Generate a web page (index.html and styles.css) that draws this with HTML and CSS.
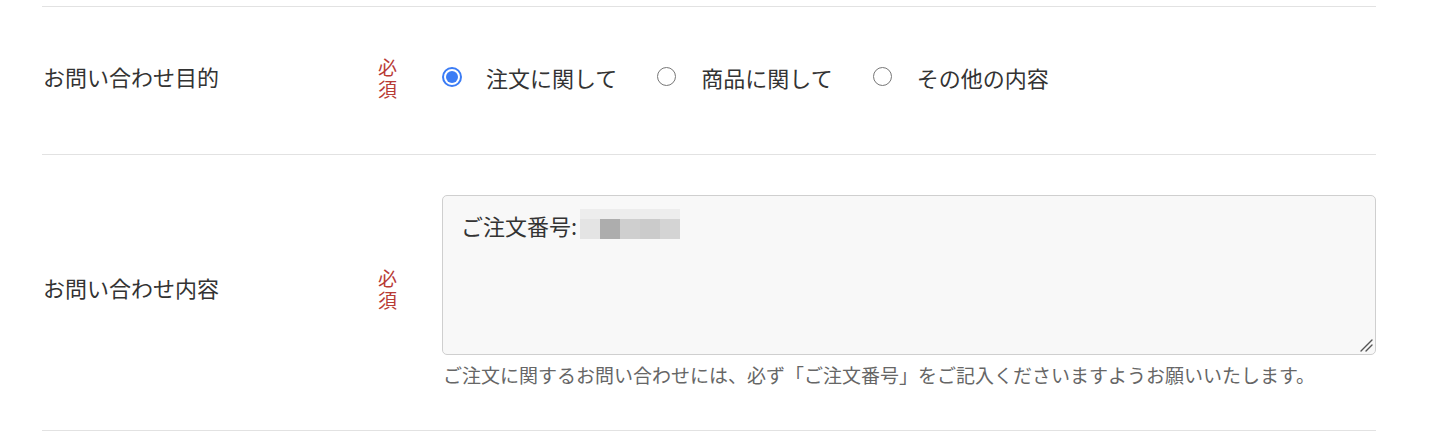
FILE: index.html
```html
<!DOCTYPE html>
<html lang="ja">
<head>
<meta charset="utf-8">
<title>お問い合わせ</title>
<link rel="stylesheet" href="styles.css">
</head>
<body>
<div class="form">
  <div class="row row-purpose">
    <div class="label">お問い合わせ目的</div>
    <div class="req">必須</div>
    <div class="field radios">
      <label class="radio"><span class="dot checked"></span><span class="rtext">注文に関して</span></label>
      <label class="radio"><span class="dot"></span><span class="rtext">商品に関して</span></label>
      <label class="radio"><span class="dot"></span><span class="rtext">その他の内容</span></label>
    </div>
  </div>
  <div class="row row-content">
    <div class="label">お問い合わせ内容</div>
    <div class="req">必須</div>
    <div class="field">
      <div class="textarea">
        <span class="ta-text">ご注文番号:</span><span class="blur"><span class="brow top"><i></i><i></i><i></i><i></i><i></i></span><span class="brow bot"><i class="b1"></i><i class="b2"></i><i class="b3"></i><i class="b4"></i><i class="b5"></i></span></span>
        <svg class="grip" width="14" height="14" viewBox="0 0 14 14"><path d="M2 13 L13 2 M7 13 L13 7" stroke="#555" stroke-width="1.4" fill="none" stroke-linecap="round"/></svg>
      </div>
      <p class="help">ご注文に関するお問い合わせには、必ず「ご注文番号」をご記入くださいますようお願いいたします。</p>
    </div>
  </div>
</div>
</body>
</html>
```
FILE: styles.css
```css
html, body {
  margin: 0;
  padding: 0;
  background: #fff;
}
body {
  font-family: "Noto Sans CJK JP", "Noto Sans", sans-serif;
  color: #333;
}
.form {
  margin: 6px 54px 0 42px;
  border-top: 1px solid #e2e2e2;
}
.row {
  display: grid;
  grid-template-columns: 336px 64px 1fr;
  align-items: center;
  border-bottom: 1px solid #e2e2e2;
}
.row-purpose {
  height: 147px;
}
.row-content {
  padding: 40px 0 41px;
}
.label {
  font-size: 22px;
  line-height: 30px;
  padding-left: 1px;
  color: #333;
  margin-bottom: 10px;
}
.req {
  width: 19px;
  font-size: 19px;
  line-height: 22px;
  color: #b83a36;
  word-break: break-all;
  margin-bottom: 6px;
}
.radios {
  display: flex;
  align-items: center;
}
.row-purpose .radios {
  margin-bottom: 8px;
}
.radio {
  display: flex;
  align-items: center;
  margin-right: 40px;
}
.dot {
  box-sizing: border-box;
  width: 20px;
  height: 20px;
  border-radius: 50%;
  border: 1.5px solid #777;
  margin-right: 24px;
  background: #fff;
  position: relative;
}
.radio + .radio .dot {
  width: 19px;
  height: 19px;
  margin-right: 25px;
}
.dot.checked {
  border: 2px solid #3b7cf5;
}
.dot.checked::after {
  content: "";
  position: absolute;
  left: 2px;
  top: 2px;
  width: 12px;
  height: 12px;
  border-radius: 50%;
  background: #3b7cf5;
}
.rtext {
  font-size: 22px;
  line-height: 30px;
  color: #333;
}
.textarea {
  box-sizing: border-box;
  height: 160px;
  border: 1px solid #cfcfcf;
  border-radius: 5px;
  background: #f8f8f8;
  padding: 14px 18px;
  position: relative;
  display: block;
}
.ta-text {
  font-size: 22px;
  line-height: 30px;
  color: #333;
  vertical-align: top;
}
.blur {
  display: inline-flex;
  flex-direction: column;
  vertical-align: top;
  margin-left: 3px;
  margin-top: -1px;
}
.brow {
  display: flex;
}
.brow i {
  display: block;
  width: 20px;
}
.brow.top i {
  height: 10px;
  background: #ededed;
}
.brow.bot i {
  height: 20px;
}
.brow.bot .b1 { background: #e4e4e4; }
.brow.bot .b2 { background: #adadad; }
.brow.bot .b3 { background: #cfcfcf; }
.brow.bot .b4 { background: #cbcbcb; }
.brow.bot .b5 { background: #d4d4d4; }
.grip {
  position: absolute;
  right: 2px;
  bottom: 2px;
}
.help {
  margin: 6px 0 0 1px;
  font-size: 19px;
  line-height: 28px;
  color: #666;
}
```
